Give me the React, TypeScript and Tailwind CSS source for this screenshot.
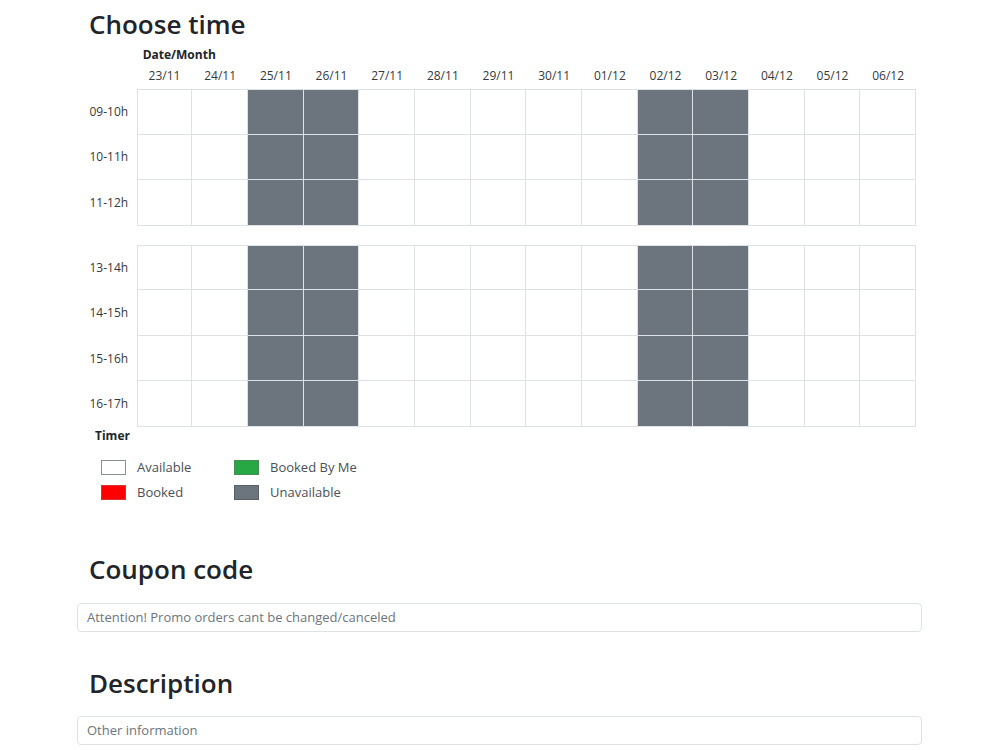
const dates = ["23/11", "24/11", "25/11", "26/11", "27/11", "28/11", "29/11", "30/11", "01/12", "02/12", "03/12", "04/12", "05/12", "06/12"];
const unavailable = ["25/11", "26/11", "02/12", "03/12"];

const morning = ["09-10h", "10-11h", "11-12h"];
const afternoon = ["13-14h", "14-15h", "15-16h", "16-17h"];

function SlotBlock({ hours, rowClass }: { hours: string[]; rowClass: string }) {
  return (
    <div className="flex flex-col">
      {hours.map((h, ri) => (
        <div key={h} className={`grid grid-cols-[repeat(15,minmax(0,1fr))] ${rowClass}`}>
          <div className="flex items-center justify-center text-[12px] text-[#343a40]">{h}</div>
          {dates.map((d, ci) => (
            <div
              key={d}
              className={`border-[#dee2e6] border-r border-b ${ri === 0 ? "border-t" : ""} ${ci === 0 ? "border-l" : ""} ${
                unavailable.includes(d) ? "bg-[#6c757d]" : "bg-white"
              }`}
            />
          ))}
        </div>
      ))}
    </div>
  );
}

function LegendItem({ color, label }: { color: string; label: string }) {
  return (
    <div className="flex items-center h-[25px]">
      <span className={`w-[25px] h-[15px] border ${color}`} />
      <span className="ml-[11px] text-[13px] text-[#495057]">{label}</span>
    </div>
  );
}

export default function App() {
  return (
    <div className="min-h-[750px] bg-white" style={{ fontFamily: '"Open Sans", "Liberation Sans", sans-serif' }}>
      <div className="ml-[77px] w-[845px] pb-8">
        {/* Choose time */}
        <h2 className="ml-[12px] mt-[8px] h-[32px] leading-[32px] text-[26px] font-semibold text-[#212529]">Choose time</h2>

        <div className="ml-[4px] w-[835px]">
          <div className="grid grid-cols-[repeat(15,minmax(0,1fr))] mt-[7px] h-[16px]">
            <div />
            <div className="col-span-3 pl-[6px] text-[12px] leading-[16px] font-bold text-[#212529]">Date/Month</div>
          </div>
          <div className="grid grid-cols-[repeat(15,minmax(0,1fr))] mt-[5px] h-[16px] mb-[5px]">
            <div />
            {dates.map((d) => (
              <div key={d} className="text-center text-[12px] leading-[16px] text-[#343a40]">{d}</div>
            ))}
          </div>

          <SlotBlock hours={morning} rowClass="h-[45.67px]" />
          <div className="h-[19px]" />
          <SlotBlock hours={afternoon} rowClass="h-[45.5px]" />
        </div>

        {/* legend */}
        <div className="ml-[18px] mt-[1px] text-[12px] leading-[16px] font-bold text-[#212529]">Timer</div>
        <div className="ml-[24px] mt-[11px] grid grid-cols-[133px_auto] w-fit">
          <LegendItem color="bg-white border-[#868e96]" label="Available" />
          <LegendItem color="bg-[#28a745] border-[#4a8a55]" label="Booked By Me" />
          <LegendItem color="bg-[#ff0000] border-[#e03030]" label="Booked" />
          <LegendItem color="bg-[#6c757d] border-[#5a6268]" label="Unavailable" />
        </div>

        {/* Coupon */}
        <h2 className="ml-[12px] mt-[48px] h-[32px] leading-[32px] text-[26px] font-semibold text-[#212529]">Coupon code</h2>
        <input
          className="mt-[18px] w-full h-[29px] px-[9px] border border-[#dee2e6] rounded-[4px] text-[13px] text-[#495057] placeholder:text-[#6c757d] outline-none"
          placeholder="Attention! Promo orders cant be changed/canceled"
        />

        {/* Description */}
        <h2 className="ml-[12px] mt-[35px] h-[32px] leading-[32px] text-[26px] font-semibold text-[#212529]">Description</h2>
        <input
          className="mt-[17px] w-full h-[29px] px-[9px] border border-[#dee2e6] rounded-[4px] text-[13px] text-[#495057] placeholder:text-[#6c757d] outline-none"
          placeholder="Other information"
        />
      </div>
    </div>
  );
}
